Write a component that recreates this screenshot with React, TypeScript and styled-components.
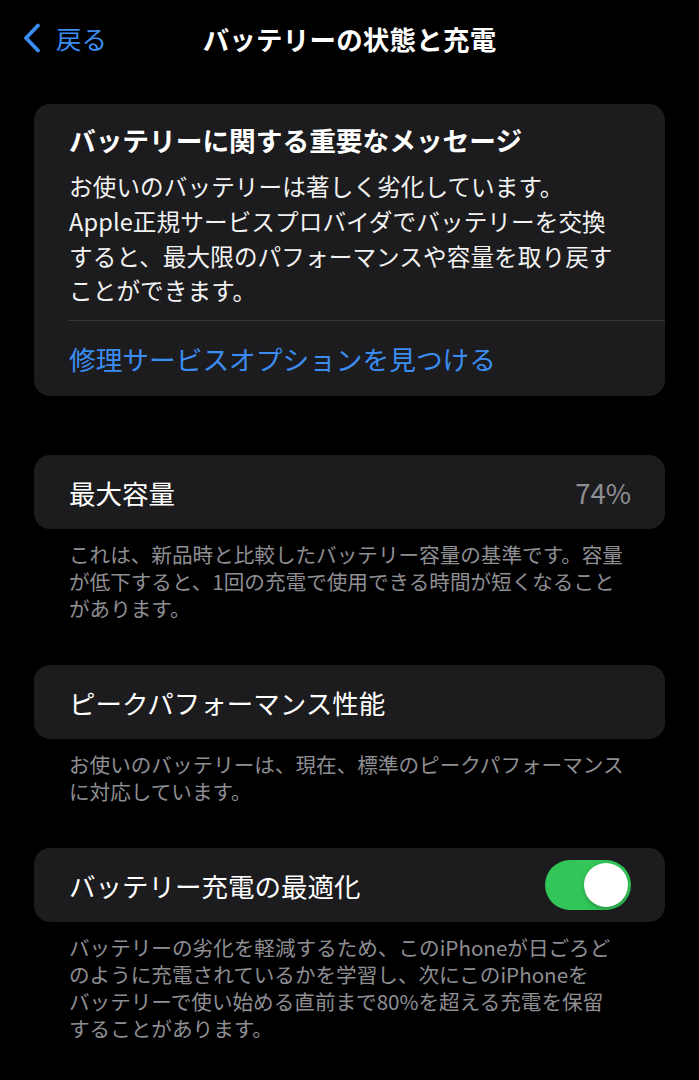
import React, { useState } from "react";
import styled, { createGlobalStyle } from "styled-components";

const GlobalStyle = createGlobalStyle`
  html, body { margin: 0; padding: 0; background: #000; }
  body {
    font-family: "Noto Sans CJK JP", "Noto Sans", Inter, sans-serif;
    color: #fff;
    -webkit-font-smoothing: antialiased;
  }
`;

const Screen = styled.div`
  width: 699px;
  min-height: 1080px;
  background: #000;
  overflow: hidden;
`;

const NavBar = styled.header`
  height: 76px;
  display: grid;
  grid-template-columns: 1fr auto 1fr;
  align-items: center;
  padding: 0 22px;
`;

const BackButton = styled.button`
  justify-self: start;
  display: flex;
  align-items: center;
  gap: 14px;
  background: none;
  border: none;
  padding: 0;
  color: #3b8df2;
  font-family: inherit;
  font-size: 25.5px;
  line-height: 1;
  cursor: pointer;
`;

const NavTitle = styled.h1`
  margin: 0;
  font-size: 26.5px;
  font-weight: 700;
  letter-spacing: 0.2px;
  color: #fff;
`;

const Content = styled.main`
  padding: 28px 34px 0;
  display: flex;
  flex-direction: column;
`;

const Section = styled.section<{ $gap: number }>`
  margin-bottom: ${(p) => p.$gap}px;
`;

const Card = styled.div`
  background: #1c1c1e;
  border-radius: 16px;
  overflow: hidden;
`;

const MessageBlock = styled.div`
  padding: 18px 35px 0;
`;

const MessageTitle = styled.h2`
  margin: 0;
  font-size: 26.7px;
  line-height: 36px;
  font-weight: 700;
  white-space: nowrap;
`;

const MessageBody = styled.p`
  margin: 11px 0 0;
  font-size: 23.6px;
  line-height: 34.8px;
  letter-spacing: 0.1px;
  white-space: nowrap;
  color: #f2f2f2;
`;

const Divider = styled.div`
  height: 1px;
  background: #38383a;
  margin: 12px 0 0 35px;
`;

const LinkRow = styled.a`
  display: flex;
  align-items: center;
  height: 75px;
  padding: 0 35px;
  font-size: 26.7px;
  color: #3b8df2;
  text-decoration: none;
  cursor: pointer;
`;

const Row = styled.div`
  display: flex;
  align-items: center;
  justify-content: space-between;
  height: 74px;
  padding: 0 34px 0 35px;
`;

const RowLabel = styled.span`
  font-size: 26.5px;
  color: #fff;
`;

const RowValue = styled.span`
  font-size: 27.5px;
  color: #8e8e93;
`;

const Footer = styled.p`
  margin: 0;
  padding: 12px 35px 0;
  font-size: 20.6px;
  line-height: 27px;
  color: #8e8e93;
  white-space: nowrap;
`;

const SwitchTrack = styled.button<{ $on: boolean }>`
  position: relative;
  width: 86px;
  height: 50px;
  border-radius: 25px;
  border: none;
  padding: 0;
  background: ${(p) => (p.$on ? "#32c659" : "#39393d")};
  cursor: pointer;
  transition: background 0.2s;
`;

const SwitchKnob = styled.span<{ $on: boolean }>`
  position: absolute;
  top: 3px;
  left: ${(p) => (p.$on ? "39px" : "3px")};
  width: 44px;
  height: 44px;
  border-radius: 50%;
  background: #fff;
  box-shadow: 0 2px 4px rgba(0, 0, 0, 0.25);
  transition: left 0.2s;
`;

const Chevron = () => (
  <svg width="20" height="30" viewBox="0 0 20 30" fill="none">
    <path
      d="M16 2.5 L4 15 L16 27.5"
      stroke="#3b8df2"
      strokeWidth="3.8"
      strokeLinecap="round"
      strokeLinejoin="round"
    />
  </svg>
);

export default function App() {
  const [optimized, setOptimized] = useState(true);
  return (
    <Screen>
      <GlobalStyle />
      <NavBar>
        <BackButton>
          <Chevron />
          戻る
        </BackButton>
        <NavTitle>バッテリーの状態と充電</NavTitle>
        <span />
      </NavBar>
      <Content>
        <Section $gap={59}>
          <Card>
            <MessageBlock>
              <MessageTitle>バッテリーに関する重要なメッセージ</MessageTitle>
              <MessageBody>
                お使いのバッテリーは著しく劣化しています。
                <br />
                Apple正規サービスプロバイダでバッテリーを交換
                <br />
                すると、最大限のパフォーマンスや容量を取り戻す
                <br />
                ことができます。
              </MessageBody>
            </MessageBlock>
            <Divider />
            <LinkRow>修理サービスオプションを見つける</LinkRow>
          </Card>
        </Section>

        <Section $gap={43}>
          <Card>
            <Row>
              <RowLabel>最大容量</RowLabel>
              <RowValue>74%</RowValue>
            </Row>
          </Card>
          <Footer>
            これは、新品時と比較したバッテリー容量の基準です。容量
            <br />
            が低下すると、1回の充電で使用できる時間が短くなること
            <br />
            があります。
          </Footer>
        </Section>

        <Section $gap={43}>
          <Card>
            <Row>
              <RowLabel>ピークパフォーマンス性能</RowLabel>
            </Row>
          </Card>
          <Footer>
            お使いのバッテリーは、現在、標準のピークパフォーマンス
            <br />
            に対応しています。
          </Footer>
        </Section>

        <Section $gap={0}>
          <Card>
            <Row>
              <RowLabel>バッテリー充電の最適化</RowLabel>
              <SwitchTrack
                $on={optimized}
                onClick={() => setOptimized(!optimized)}
                aria-pressed={optimized}
              >
                <SwitchKnob $on={optimized} />
              </SwitchTrack>
            </Row>
          </Card>
          <Footer>
            バッテリーの劣化を軽減するため、このiPhoneが日ごろど
            <br />
            のように充電されているかを学習し、次にこのiPhoneを
            <br />
            バッテリーで使い始める直前まで80%を超える充電を保留
            <br />
            することがあります。
          </Footer>
        </Section>
      </Content>
    </Screen>
  );
}
